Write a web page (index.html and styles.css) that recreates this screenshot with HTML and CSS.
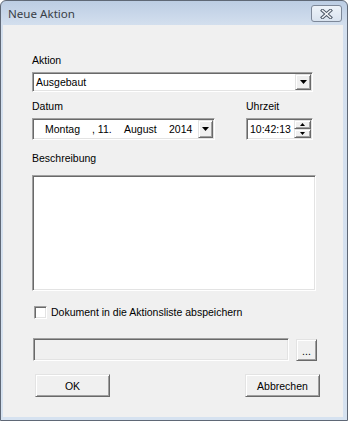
FILE: index.html
```html
<!DOCTYPE html>
<html lang="de">
<head>
  <meta charset="UTF-8" />
  <title>Neue Aktion</title>
  <link rel="stylesheet" href="styles.css">
</head>
<body>
<div class="window">
  <div class="titlebar">
    <span class="title">Neue Aktion</span>
    <div class="close-btn">
      <svg width="13" height="10" viewBox="0 0 13 10">
        <path d="M2.5 1.5 L10.5 8.5 M10.5 1.5 L2.5 8.5" stroke="#4d5866" stroke-width="3.4" stroke-linecap="square" fill="none"/>
        <path d="M2.5 1.5 L10.5 8.5 M10.5 1.5 L2.5 8.5" stroke="#f4f6f9" stroke-width="1.5" stroke-linecap="square" fill="none"/>
      </svg>
    </div>
  </div>

  <div class="client">
    <div class="label">Aktion</div>
    <div class="combo sunken">
      <span class="value">Ausgebaut</span>
      <div class="drop-btn raised">
        <svg width="7" height="4" viewBox="0 0 7 4"><polygon points="0,0 7,0 3.5,4" fill="#000"/></svg>
      </div>
    </div>

    <div class="date-row">
      <div class="date-col">
        <div class="label">Datum</div>
        <div class="datebox sunken">
          <span class="part part-day">Montag</span>
          <span class="part part-num">, 11.</span>
          <span class="part part-month">August</span>
          <span class="part part-year">2014</span>
          <div class="drop-btn raised">
            <svg width="7" height="4" viewBox="0 0 7 4"><polygon points="0,0 7,0 3.5,4" fill="#000"/></svg>
          </div>
        </div>
      </div>
      <div class="time-col">
        <div class="label">Uhrzeit</div>
        <div class="timebox sunken">
          <span class="value">10:42:13</span>
          <div class="spinner">
            <div class="spin raised">
              <svg width="5" height="3" viewBox="0 0 5 3"><polygon points="2.5,0 5,3 0,3" fill="#000"/></svg>
            </div>
            <div class="spin raised">
              <svg width="5" height="3" viewBox="0 0 5 3"><polygon points="0,0 5,0 2.5,3" fill="#000"/></svg>
            </div>
          </div>
        </div>
      </div>
    </div>

    <div class="label label-desc">Beschreibung</div>
    <div class="textarea sunken"></div>

    <div class="check-row">
      <div class="checkbox sunken"></div>
      <span>Dokument in die Aktionsliste abspeichern</span>
    </div>

    <div class="file-row">
      <div class="file-box sunken"></div>
      <div class="btn dots-btn raised">...</div>
    </div>

    <div class="buttons">
      <div class="btn main-btn raised">OK</div>
      <div class="btn main-btn raised">Abbrechen</div>
    </div>
  </div>
</div>
</body>
</html>
```

FILE: styles.css
```css
* {
    box-sizing: border-box;
}

body {
    margin: 0;
    background-color: #ffffff;
    font-family: "Liberation Sans", Arial, sans-serif;
    font-size: 10.5px;
    color: #000000;
}

.window {
    width: 348px;
    height: 421px;
    border: 1px solid #5f6876;
    border-radius: 6px 6px 0 0;
    background: linear-gradient(#bccde3, #d3dfee 24px, #d6e2f0);
    padding: 0 4px 3px 2px;
    display: flex;
    flex-direction: column;
}

.titlebar {
    height: 24px;
    display: flex;
    align-items: center;
    justify-content: space-between;
    padding-left: 5px;
}

.title {
    font-family: "Noto Sans", sans-serif;
    font-size: 11.6px;
    color: #3a3f47;
    margin-top: 1px;
}

.close-btn {
    width: 31px;
    height: 17px;
    margin-right: 1px;
    margin-top: 1px;
    border: 1px solid #7d8899;
    border-radius: 3px;
    background: linear-gradient(#eef3f9, #d9e3ef);
    display: flex;
    align-items: center;
    justify-content: center;
}

.client {
    flex: 1;
    background-color: #f0f0f0;
    padding: 29px 0 0 29px;
}

/* classic 3D borders */
.sunken {
    border: 1px solid;
    border-color: #a0a0a0 #ffffff #ffffff #a0a0a0;
    box-shadow: inset 1px 1px 0 #696969, inset -1px -1px 0 #e3e3e3;
    padding: 1px;
}

.raised {
    border: 1px solid;
    border-color: #e3e3e3 #696969 #696969 #e3e3e3;
    box-shadow: inset 1px 1px 0 #ffffff, inset -1px -1px 0 #a0a0a0;
    background-color: #f0f0f0;
}

.label {
    height: 13px;
    line-height: 13px;
}

.combo {
    margin-top: 5px;
    width: 281px;
    height: 20px;
    background-color: #ffffff;
    display: flex;
    align-items: center;
    justify-content: space-between;
}

.value {
    padding-left: 2px;
    line-height: 16px;
}

.drop-btn {
    width: 16px;
    height: 16px;
    display: flex;
    align-items: center;
    justify-content: center;
}

.date-row {
    margin-top: 8px;
    display: flex;
}

.date-col {
    width: 183px;
}

.time-col {
    margin-left: 31px;
}

.datebox {
    margin-top: 5px;
    width: 183px;
    height: 22px;
    background-color: #ffffff;
    display: flex;
    align-items: center;
}

.datebox .drop-btn {
    width: 15px;
    height: 18px;
    margin-left: auto;
}

.part {
    line-height: 18px;
}

.part-day {
    width: 58px;
    padding-left: 11px;
}

.part-num {
    width: 32px;
}

.part-month {
    width: 45px;
}

.timebox {
    margin-top: 5px;
    width: 67px;
    height: 22px;
    background-color: #ffffff;
    display: flex;
    align-items: center;
    justify-content: space-between;
}

.timebox .value {
    padding-left: 2px;
}

.spinner {
    width: 17px;
    height: 18px;
    display: flex;
    flex-direction: column;
}

.spin {
    flex: 1;
    display: flex;
    align-items: center;
    justify-content: center;
}

.label-desc {
    margin-top: 12px;
}

.textarea {
    margin-top: 10px;
    width: 284px;
    height: 116px;
    background-color: #ffffff;
}

.check-row {
    margin-top: 15px;
    height: 13px;
    display: flex;
    align-items: center;
    line-height: 13px;
}

.checkbox {
    width: 13px;
    height: 13px;
    margin-left: 2px;
    margin-right: 4px;
    background-color: #ffffff;
}

.file-row {
    margin-top: 19px;
    display: flex;
    align-items: flex-start;
}

.file-box {
    margin-left: 1px;
    width: 256px;
    height: 23px;
    background-color: #f0f0f0;
}

.btn {
    display: flex;
    align-items: center;
    justify-content: center;
}

.dots-btn {
    margin-left: 7px;
    margin-top: 1px;
    width: 21px;
    height: 22px;
    padding-top: 2px;
}

.buttons {
    margin-top: 13px;
    width: 288px;
    padding-left: 3px;
    display: flex;
    justify-content: space-between;
}

.main-btn {
    width: 75px;
    height: 23px;
}
```
